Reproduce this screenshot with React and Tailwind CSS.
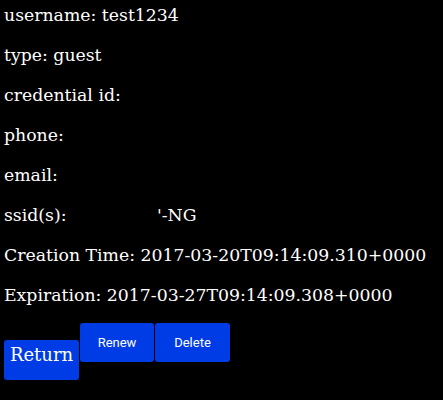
import React from "react";

const rows = [
  ["username:", "test1234"],
  ["type:", "guest"],
  ["credential id:", ""],
  ["phone:", ""],
  ["email:", ""],
];

export default function App() {
  return (
    <div className="min-h-[400px] w-full bg-black px-[4px] pt-[3px] text-white" style={{ fontFamily: '"DejaVu Serif", serif' }}>
      {rows.map(([label, value]) => (
        <p key={label} className="mb-[16px] text-[17.3px] leading-[24px]">
          {label} {value}
        </p>
      ))}
      <p className="mb-[16px] text-[17.3px] leading-[24px]">
        ssid(s): <span className="inline-block w-[85px]"></span>'-NG
      </p>
      <p className="mb-[16px] text-[17.3px] leading-[24px]">Creation Time: 2017-03-20T09:14:09.310+0000</p>
      <p className="mb-[16px] text-[17.3px] leading-[24px]">Expiration: 2017-03-27T09:14:09.308+0000</p>
      {/* buttons */}
      <div className="flex items-start gap-px">
        <button className="mt-[17px] h-[40px] w-[75px] rounded-[3px] bg-[#003ce6] pb-[12px] text-[18px] text-white">
          Return
        </button>
        <button className="h-[39px] w-[74px] rounded-[3px] bg-[#003ce6] text-[13px] text-white" style={{ fontFamily: "Roboto, sans-serif" }}>
          Renew
        </button>
        <button className="h-[39px] w-[75px] rounded-[3px] bg-[#003ce6] text-[13px] text-white" style={{ fontFamily: "Roboto, sans-serif" }}>
          Delete
        </button>
      </div>
    </div>
  );
}
